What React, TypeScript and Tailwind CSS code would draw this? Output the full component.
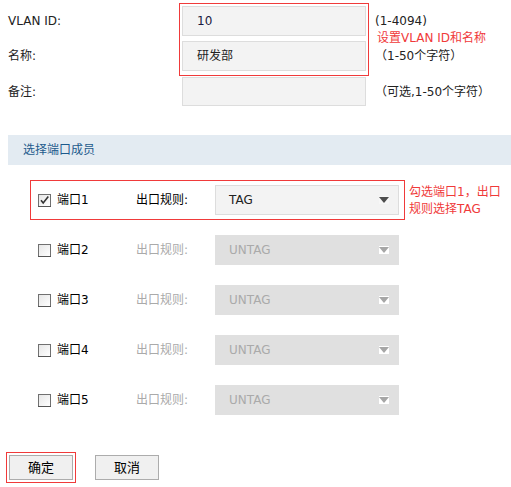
import React from "react";

const ports = [
  { name: "端口1", rule: "TAG", enabled: true },
  { name: "端口2", rule: "UNTAG", enabled: false },
  { name: "端口3", rule: "UNTAG", enabled: false },
  { name: "端口4", rule: "UNTAG", enabled: false },
  { name: "端口5", rule: "UNTAG", enabled: false },
];

function CheckBox({ checked }: { checked: boolean }) {
  return (
    <svg width="13" height="13" viewBox="0 0 13 13" className="shrink-0">
      <defs>
        <linearGradient id="cbg" x1="0" y1="0" x2="1" y2="1">
          <stop offset="0" stopColor="#e6e6e6" />
          <stop offset="1" stopColor="#ffffff" />
        </linearGradient>
      </defs>
      <rect x="0.5" y="0.5" width="12" height="12" fill="url(#cbg)" stroke="#707070" />
      <rect x="0" y="12" width="13" height="1" fill="#555" />
      {checked && (
        <path d="M3 6.2 L5.2 9 L10.3 2.6" fill="none" stroke="#333" strokeWidth="1.6" />
      )}
    </svg>
  );
}

function Arrow({ enabled }: { enabled: boolean }) {
  return (
    <div
      className={
        enabled
          ? "flex h-[8px] w-[10px] items-center justify-center bg-[#f7f7f7]"
          : "flex h-[8px] w-[10px] items-center justify-center bg-white"
      }
    >
      <svg width="10" height="6" viewBox="0 0 10 6">
        <path d="M0 0 H10 L5 6 Z" fill={enabled ? "#4d4d4d" : "#a6a6a6"} />
      </svg>
    </div>
  );
}

export default function App() {
  return (
    <div className="relative h-[487px] w-[511px] overflow-hidden bg-white text-[12px] text-[#222] [font-family:'DejaVu_Sans','Noto_Sans_CJK_SC',sans-serif]">
      {/* id + name, with the red note frame around both inputs */}
      <div className="flex pt-[3px]">
        <div className="flex w-[179px] shrink-0 flex-col gap-[5px] pl-2 pt-[3px]">
          <div className="flex h-[30px] items-center">VLAN ID:</div>
          <div className="flex h-[30px] items-center">名称:</div>
        </div>
        <div className="flex shrink-0 flex-col gap-[5px] border border-[#f03a3a] px-[2px] pb-[4px] pt-[2px]">
          <div className="flex h-[30px] w-[184px] items-center border border-[#dddddd] bg-[#f3f3f3] pl-[14px] text-[#1a1a40]">
            10
          </div>
          <div className="flex h-[30px] w-[184px] items-center border border-[#dddddd] bg-[#f3f3f3] pl-[14px]">
            研发部
          </div>
        </div>
        <div className="flex flex-col pl-[6px] pt-[3px]">
          <div className="flex h-[30px] items-center">(1-4094)</div>
          <div className="-mt-[5px] ml-[2px] h-[14px] leading-[14px] text-[#f03a3a]">设置VLAN ID和名称</div>
          <div className="-mt-[4px] flex h-[30px] items-center">（1-50个字符）</div>
        </div>
      </div>

      <div className="mt-px flex h-[29px] items-center">
        <span className="w-[182px] shrink-0 pl-2">备注:</span>
        <div className="h-[29px] w-[184px] shrink-0 border border-[#dddddd] bg-[#f3f3f3]" />
        <span className="ml-[9px]">（可选,1-50个字符）</span>
      </div>

      <div className="ml-2 mt-[29px] flex h-[30px] items-center bg-[#e3ebf2] pl-[15px] text-[#1d5a8c]">
        选择端口成员
      </div>

      <div className="mt-[15px] flex flex-col gap-[10px] pl-[30px]">
        {ports.map((p) => (
          <div
            key={p.name}
            className={
              p.enabled
                ? "flex h-[40px] w-[375px] items-center border border-[#f03a3a] pl-[7px]"
                : "flex h-[40px] w-[375px] items-center border border-transparent pl-[7px]"
            }
          >
            <CheckBox checked={p.enabled} />
            <span className="ml-[6px] w-[79px] text-black">{p.name}</span>
            <span className={p.enabled ? "w-[79px] text-black" : "w-[79px] text-[#aaaaaa]"}>出口规则:</span>
            <div
              className={
                p.enabled
                  ? "flex h-[30px] w-[184px] items-center justify-between border border-[#dddddd] bg-[#f3f3f3] pl-[13px] pr-[9px] text-[#222]"
                  : "flex h-[30px] w-[184px] items-center justify-between bg-[#e0e0e0] pl-[14px] pr-[10px] text-[#aaaaaa]"
              }
            >
              <span>{p.rule}</span>
              <Arrow enabled={p.enabled} />
            </div>
          </div>
        ))}
      </div>

      <div className="absolute left-[409px] top-[184px] leading-[17px] text-[#f03a3a]">
        <div>勾选端口1，出口</div>
        <div>规则选择TAG</div>
      </div>

      <div className="ml-[6px] mt-[32px] flex items-center">
        <div className="border border-[#f03a3a] p-[2px]">
          <button className="flex h-[25px] w-[64px] items-center justify-center border border-[#acacac] bg-[#f0f0f0] text-[13px] text-black">
            确定
          </button>
        </div>
        <button className="ml-[19px] flex h-[25px] w-[64px] items-center justify-center border border-[#acacac] bg-[#f0f0f0] text-[13px] text-black">
          取消
        </button>
      </div>
    </div>
  );
}
